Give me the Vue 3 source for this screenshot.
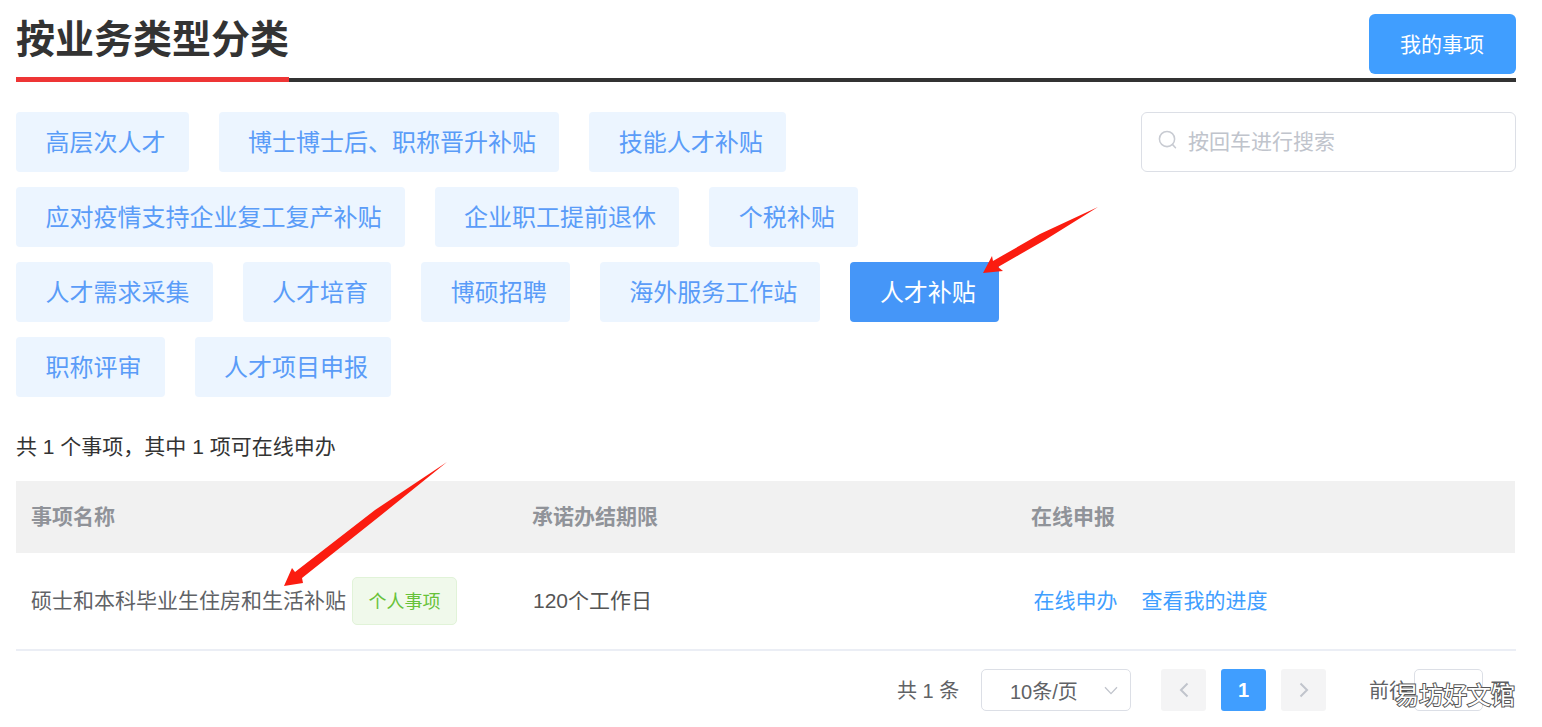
<script setup>
const rows = [
  [{ t: '高层次人才' }, { t: '博士博士后、职称晋升补贴' }, { t: '技能人才补贴' }],
  [{ t: '应对疫情支持企业复工复产补贴' }, { t: '企业职工提前退休' }, { t: '个税补贴' }],
  [{ t: '人才需求采集' }, { t: '人才培育' }, { t: '博硕招聘' }, { t: '海外服务工作站' }, { t: '人才补贴', active: true }],
  [{ t: '职称评审' }, { t: '人才项目申报' }]
]
const tags = rows.flat()
</script>

<template>
  <div class="page">
    <header class="head">
      <h1 class="title">按业务类型分类</h1>
      <button class="mine">我的事项</button>
    </header>

    <section class="filters">
      <div class="tags">
        <a v-for="tag in tags" :key="tag.t" class="tag" :class="{ active: tag.active }">{{ tag.t }}</a>
      </div>
      <div class="search">
        <svg class="search-icon" viewBox="0 0 20 20" width="19" height="19" fill="none" stroke="#c8cbd2" stroke-width="1.6">
          <circle cx="9.5" cy="9.5" r="8" />
          <path d="M15.4 15.4 18.4 18.6" stroke-linecap="round" />
        </svg>
        <span>按回车进行搜索</span>
      </div>
    </section>

    <p class="summary">共 1 个事项，其中 1 项可在线申办</p>

    <div class="table">
      <div class="thead">
        <div class="cell">事项名称</div>
        <div class="cell">承诺办结期限</div>
        <div class="cell">在线申报</div>
      </div>
      <div class="tbody">
        <div class="cell name"><span class="lift">硕士和本科毕业生住房和生活补贴</span><span class="badge">个人事项</span></div>
        <div class="cell limit">120个工作日</div>
        <div class="cell links"><a>在线申办</a><a>查看我的进度</a></div>
      </div>
    </div>

    <footer class="pager">
      <span class="total">共 1 条</span>
      <div class="size">
        <span>10条/页</span>
        <svg viewBox="0 0 14 9" width="14" height="9" fill="none" stroke="#c0c4cc" stroke-width="1.3"><path d="M1 1.2 7 7.6 13 1.2" /></svg>
      </div>
      <div class="pages">
        <span class="pg"><svg viewBox="0 0 10 16" width="10" height="16" fill="none" stroke="#c0c4cc" stroke-width="2"><path d="M8.5 1.5 2 8l6.5 6.5" /></svg></span>
        <span class="pg cur">1</span>
        <span class="pg"><svg viewBox="0 0 10 16" width="10" height="16" fill="none" stroke="#c0c4cc" stroke-width="2"><path d="M1.5 1.5 8 8l-6.5 6.5" /></svg></span>
      </div>
      <span class="goto">前往</span>
      <span class="jump"></span>
      <span class="goto-end">页</span>
    </footer>

    <svg class="arrows" width="1542" height="727" viewBox="0 0 1542 727">
      <polygon fill="#fb1c10" points="1098,207 1045,240 998,267 1003,271 983,273 992,256 993,261 1040,234" />
      <polygon fill="#fb1c10" points="447,462 380,516 302,578 303,583 284,586 292,568 295,572 375,510" />
    </svg>
    <div class="mark">易坊好文馆</div>
  </div>
</template>

<style scoped>
.page {
  position: relative;
  width: 1542px;
  height: 727px;
  overflow: hidden;
  box-sizing: border-box;
  padding: 14px 26px 0 16px;
  background: #fff;
  font-family: "Liberation Sans", "Noto Sans CJK SC", sans-serif;
  color: #333;
}
.head {
  display: flex;
  justify-content: space-between;
  box-sizing: border-box;
  height: 68px;
  border-bottom: 4px solid #333;
  position: relative;
}
.head::after {
  content: "";
  position: absolute;
  left: 0;
  bottom: -4px;
  width: 273px;
  height: 5px;
  background: #ee3535;
}
.title {
  margin: 0;
  font-size: 39px;
  line-height: 52px;
  font-weight: 700;
  color: #333;
}
.mine {
  width: 147px;
  height: 60px;
  border: 0;
  border-radius: 6px;
  padding: 0 1px 2px 0;
  background: #409eff;
  color: #fff;
  font: 21px "Liberation Sans", "Noto Sans CJK SC", sans-serif;
}
.filters {
  display: flex;
  margin-top: 30px;
  justify-content: space-between;
  align-items: flex-start;
}
.tags {
  width: 1000px;
  display: flex;
  flex-wrap: wrap;
  gap: 15px 30px;
}
.tag {
  height: 60px;
  padding: 0 23.1px 3px 29.5px;
  display: flex;
  align-items: center;
  box-sizing: border-box;
  border-radius: 4px;
  background: #ecf5ff;
  color: #5a9cf8;
  font-size: 24px;
}
.tag.active {
  background: #4596f8;
  color: #fff;
}
.search {
  width: 375px;
  height: 60px;
  box-sizing: border-box;
  border: 1px solid #dcdfe6;
  border-radius: 6px;
  display: flex;
  align-items: center;
  gap: 11px;
  padding: 0 0 5px 16px;
  color: #c0c4cc;
  font-size: 21px;
}
.summary {
  margin: 36px 0 0;
  font-size: 21px;
  line-height: 28px;
  color: #333;
}
.table {
  width: 1499px;
  margin-top: 20px;
}
.thead,
.tbody {
  display: grid;
  grid-template-columns: 501px 499px 1fr;
  align-items: center;
  font-size: 21px;
}
.thead {
  height: 72px;
  padding-bottom: 4px;
  box-sizing: border-box;
  background: #f1f1f1;
  color: #909399;
  font-weight: 700;
}
.tbody {
  width: 1500px;
  height: 98px;
  box-sizing: border-box;
  color: #606266;
  border-bottom: 2px solid #ebeef5;
}
.cell {
  padding-left: 15px;
}
.tbody .limit,
.tbody .links {
  padding-bottom: 5px;
}
.name {
  display: flex;
  align-items: center;
}
.lift {
  padding-bottom: 4px;
}
.badge {
  margin-left: 6px;
  width: 105px;
  height: 48px;
  box-sizing: border-box;
  display: flex;
  align-items: center;
  justify-content: center;
  padding-bottom: 3px;
  border: 1px solid #e1f3d8;
  border-radius: 5px;
  background: #f0f9eb;
  color: #67c23a;
  font-size: 18px;
}
.limit {
  padding-left: 16px;
  color: #555;
}
.links {
  padding-left: 17.5px;
  display: flex;
  gap: 24px;
  color: #409eff;
}
.pager {
  display: flex;
  align-items: center;
  height: 42px;
  margin-top: 18px;
  padding-left: 881px;
  font-size: 20px;
  color: #606266;
}
.total {
  width: 84px;
  padding-bottom: 2px;
}
.size {
  width: 150px;
  height: 42px;
  box-sizing: border-box;
  border: 1px solid #dcdfe6;
  border-radius: 5px;
  display: flex;
  align-items: center;
  justify-content: space-between;
  padding: 0 12px 0 28px;
}
.pages {
  display: flex;
  gap: 15px;
  margin-left: 30px;
}
.pg {
  width: 45px;
  height: 42px;
  border-radius: 3px;
  background: #f4f4f5;
  display: flex;
  align-items: center;
  justify-content: center;
}
.pg.cur {
  background: #409eff;
  color: #fff;
  font-weight: 700;
}
.goto {
  margin-left: 43px;
  padding-bottom: 2px;
}
.jump {
  width: 69px;
  height: 42px;
  box-sizing: border-box;
  margin-left: 5px;
  border: 1px solid #dcdfe6;
  border-radius: 5px;
}
.goto-end {
  margin-left: 7px;
  padding-bottom: 2px;
}
.arrows {
  position: absolute;
  left: 0;
  top: 0;
  pointer-events: none;
}
.mark {
  position: absolute;
  left: 1395px;
  top: 680px;
  font-size: 24px;
  line-height: 32px;
  color: #fff;
  -webkit-text-stroke: 2px #555;
  paint-order: stroke fill;
  white-space: nowrap;
}
</style>
